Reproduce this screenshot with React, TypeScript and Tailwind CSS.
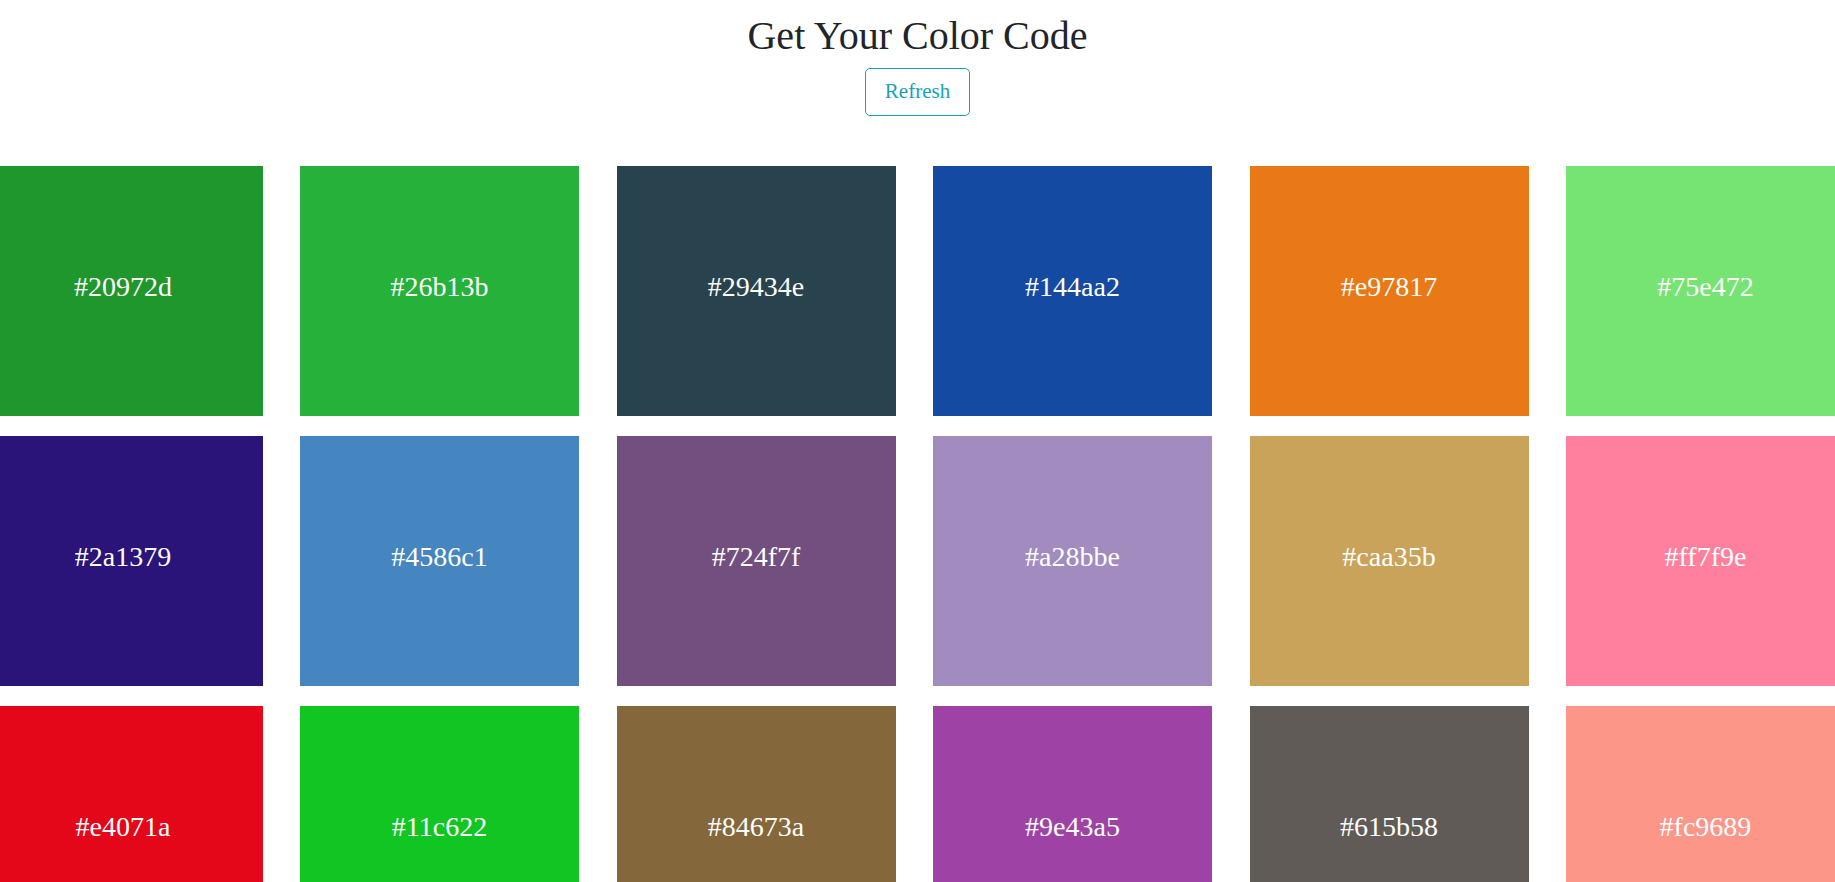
import React from 'react';

const colors = [
  '#20972d', '#26b13b', '#29434e', '#144aa2', '#e97817', '#75e472',
  '#2a1379', '#4586c1', '#724f7f', '#a28bbe', '#caa35b', '#ff7f9e',
  '#e4071a', '#11c622', '#84673a', '#9e43a5', '#615b58', '#fc9689',
];

export default function App() {
  return (
    <div
      className="w-full h-[882px] overflow-hidden bg-white text-[#212529]"
      style={{ fontFamily: '"Liberation Serif", "DejaVu Serif", serif' }}
    >
      {/* Header */}
      <div className="flex flex-col items-center pt-[12px]">
        <h1 className="text-[40px] leading-[1.2] mb-2">Get Your Color Code</h1>
        <button className="h-[48px] px-[19px] text-[21px] leading-[1.5] text-[#17a2b8] border border-[#17a2b8] rounded-[5px] bg-white">
          Refresh
        </button>
      </div>

      {/* Swatches */}
      <div className="mt-[50px] ml-[-16.5px] w-[1870px] grid grid-cols-[repeat(6,279px)] gap-x-[37.5px] gap-y-[20px]">
        {colors.map((c) => (
          <div
            key={c}
            className="h-[250px] flex items-center justify-center"
            style={{ backgroundColor: c }}
          >
            <h4 className="text-[28px] leading-[1.2] mb-2 text-white">{c}</h4>
          </div>
        ))}
      </div>
    </div>
  );
}
